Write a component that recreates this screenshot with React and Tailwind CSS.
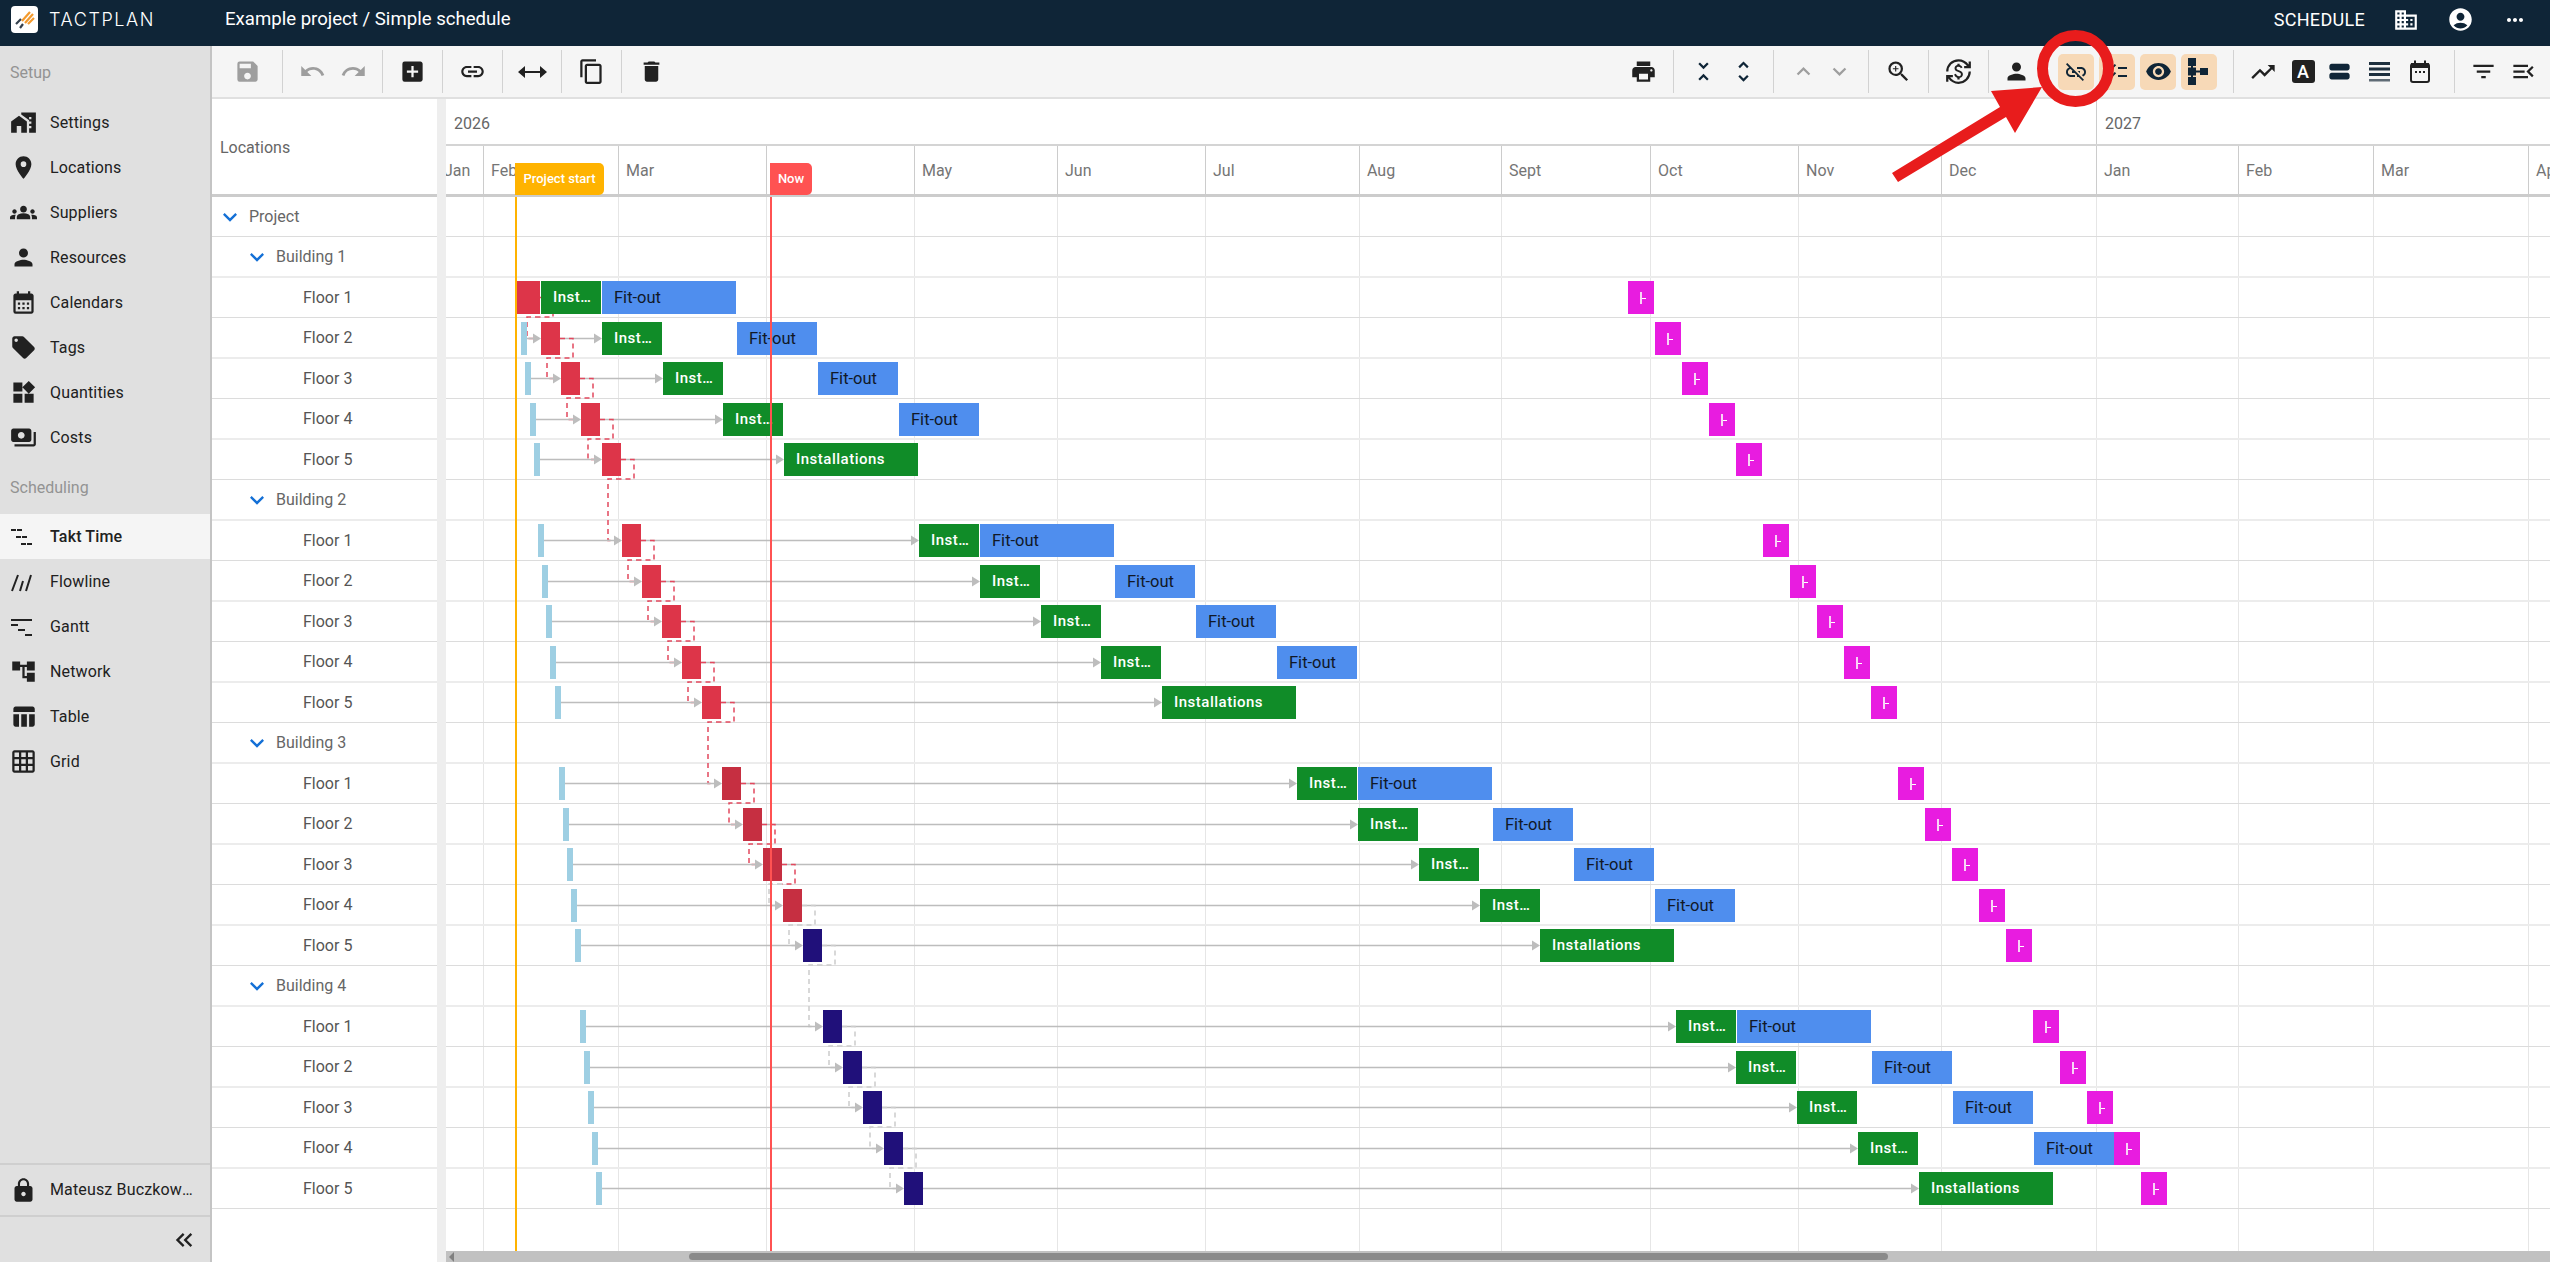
import React from "react";
import {
  MdSave, MdUndo, MdRedo, MdAddBox, MdLink, MdContentCopy, MdDelete, MdPrint, MdUnfoldLess, MdUnfoldMore,
  MdKeyboardArrowUp, MdKeyboardArrowDown, MdZoomIn, MdCurrencyExchange, MdPerson, MdLinkOff, MdChecklist,
  MdVisibility, MdTrendingUp, MdViewStream, MdFilterList, MdMenuOpen, MdHomeWork, MdPlace,
  MdGroups, MdCalendarMonth, MdLocalOffer, MdWidgets, MdPayments, MdAccountTree, MdTableChart, MdGridOn,
  MdLock, MdKeyboardDoubleArrowLeft, MdDomain, MdAccountCircle, MdMoreHoriz,
} from "react-icons/md";

const ORIGIN = 446;
const rowTop = (i) => Math.floor(i / 2) * 81 + (i % 2) * 40;
const rowH = (i) => (i % 2 ? 41 : 40);
const barOff = (i) => (i % 2 ? 4 : 3);
const rowBottom = (i) => rowTop(i) + rowH(i);
const center = (i) => rowTop(i) + barOff(i) + 16.5;

const rows = [{ label: "Project", lvl: 0 }];
for (let b = 1; b <= 4; b++) {
  rows.push({ label: `Building ${b}`, lvl: 1 });
  for (let f = 1; f <= 5; f++) rows.push({ label: `Floor ${f}`, lvl: 2, k: (b - 1) * 5 + f - 1 });
}

const redX = (k) => (k === 0 ? 517 : Math.round(520.9 + 20.15 * k));
const redR = (k) => (k === 0 ? 540 : redX(k) + 19);
const redColor = (k) => (k >= 14 ? "bg-[#20107a]" : k >= 10 ? "bg-[#c62f41]" : "bg-[#dd3549]");
const lightX = (k) => Math.round(517 + 4.17 * k);
const greenX = (k) => {
  let x = 541;
  for (let j = 0; j < k; j++) x += j % 5 === 4 ? 135.2 : 60.75;
  return Math.round(x);
};
const greenW = (k) => (k % 5 === 4 ? 134 : 60);
const blueX = (k) => {
  const base = greenX(k - (k % 5)) + 61;
  return k % 5 === 0 ? base : Math.round(base + 135 + 80.8 * (k % 5 - 1));
};
const blueW = (k) => (k % 5 === 0 ? 134 : 80);

const months = [
  ["Jan", 437], ["Feb", 483], ["Mar", 618], ["Apr", 766], ["May", 914], ["Jun", 1057], ["Jul", 1205],
  ["Aug", 1359], ["Sept", 1501], ["Oct", 1650], ["Nov", 1798], ["Dec", 1941], ["Jan", 2096], ["Feb", 2238],
  ["Mar", 2373], ["Apr", 2528],
];

function TaktIcon() {
  return (
    <svg width="24" height="24" viewBox="0 0 24 24" fill="#212121">
      <rect x="1" y="4" width="5" height="2" /><rect x="7" y="4" width="5" height="2" />
      <rect x="6" y="11" width="5" height="2" /><rect x="12" y="11" width="5" height="2" />
      <rect x="11" y="18" width="5" height="2" /><rect x="17" y="18" width="5" height="2" />
    </svg>
  );
}
function FlowIcon() {
  return (
    <svg width="24" height="24" viewBox="0 0 24 24" stroke="#212121" strokeWidth="2" fill="none">
      <path d="M2 21 L8 5 M10 21 L13 11 M16 21 L21 5" />
    </svg>
  );
}
function GanttIcon() {
  return (
    <svg width="24" height="24" viewBox="0 0 24 24" fill="#212121">
      <rect x="1" y="4" width="21" height="2" /><rect x="1" y="9" width="7" height="2" />
      <rect x="8" y="14" width="7" height="2" /><rect x="15" y="19" width="7" height="2" />
    </svg>
  );
}
function SplitArrow() {
  return (
    <svg width="29" height="14" viewBox="0 0 29 14" fill="#212121">
      <rect x="5" y="6" width="19" height="2" /><path d="M0 7 L7 1 V13 Z M29 7 L22 1 V13 Z" />
    </svg>
  );
}
function TreeIcon() {
  return (
    <svg width="22" height="27" viewBox="0 0 22 27" fill="#0f2537">
      <rect x="0" y="0" width="8" height="8" /><rect x="0" y="9.5" width="8" height="8" /><rect x="0" y="19" width="8" height="8" />
      <rect x="3" y="6" width="2" height="15" /><rect x="6" y="12.5" width="8" height="2" /><rect x="12" y="10" width="8" height="7" />
    </svg>
  );
}
function CalIcon() {
  return (
    <svg width="22" height="24" viewBox="0 0 22 24" fill="none">
      <rect x="2" y="4" width="18" height="18" rx="2" stroke="#212121" strokeWidth="2" />
      <rect x="2" y="3" width="18" height="5" fill="#212121" />
      <rect x="5" y="0.5" width="2" height="4" fill="#212121" /><rect x="15" y="0.5" width="2" height="4" fill="#212121" />
      <rect x="6" y="11" width="2" height="2" fill="#212121" /><rect x="10" y="11" width="2" height="2" fill="#212121" /><rect x="14" y="11" width="2" height="2" fill="#212121" />
    </svg>
  );
}
function HeadlineIcon() {
  return (
    <svg width="21" height="20" viewBox="0 0 21 20">
      <rect x="0" y="0" width="21" height="3" fill="#1d2f3e" /><rect x="0" y="5.5" width="21" height="3" fill="#1d2f3e" />
      <rect x="0" y="11" width="21" height="3" fill="#1d2f3e" /><rect x="0" y="17" width="21" height="2.5" fill="#5f6b75" />
    </svg>
  );
}
function Logo() {
  return (
    <div className="w-[27px] h-[27px] rounded-[4px] bg-white flex items-center justify-center">
      <svg width="22" height="20" viewBox="0 0 22 20" fill="none" strokeWidth="2.2" strokeLinecap="butt">
        <path d="M2 14 L7 9 M6 18 L9 14" stroke="#33404d" />
        <path d="M8 11 L16 2 M11 13 L19 4 M14 14 L20 8" stroke="#f39a2d" />
      </svg>
    </div>
  );
}

const Divider = () => <div className="w-px h-[43px] bg-[#d2d2d2] shrink-0" />;

function Group({ className = "", children }) {
  return <div className={`flex items-center justify-center shrink-0 h-full ${className}`}>{children}</div>;
}

function Orange({ children }) {
  return <div className="w-[36px] h-[36px] rounded-[5px] bg-[#f7d9b7] flex items-center justify-center text-[#0f2537]">{children}</div>;
}

function Toolbar() {
  const s = 27;
  return (
    <div className="h-[53px] bg-[#f5f5f5] border-b-2 border-[#e0e0e0] flex items-center text-[#212121] shrink-0">
      <Group className="w-[70px] text-[#9e9e9e]"><MdSave size={s} /></Group>
      <Divider />
      <Group className="w-[99px] gap-[14px] text-[#9e9e9e]"><MdUndo size={s} /><MdRedo size={s} /></Group>
      <Divider />
      <Group className="w-[59px]"><MdAddBox size={s} /></Group>
      <Divider />
      <Group className="w-[59px]"><MdLink size={s} /></Group>
      <Divider />
      <Group className="w-[58px]"><SplitArrow /></Group>
      <Divider />
      <Group className="w-[59px]"><MdContentCopy size={s} /></Group>
      <Divider />
      <Group className="w-[58px]"><MdDelete size={s} /></Group>
      <div className="flex-1" />
      <Group className="w-[60px]"><MdPrint size={s} /></Group>
      <Divider />
      <Group className="w-[99px] gap-[13px] text-[#0f2537]"><MdUnfoldLess size={s} /><MdUnfoldMore size={s} /></Group>
      <Divider />
      <Group className="w-[94px] gap-[9px] text-[#9e9e9e]"><MdKeyboardArrowUp size={s} /><MdKeyboardArrowDown size={s} /></Group>
      <Divider />
      <Group className="w-[59px]"><MdZoomIn size={s} /></Group>
      <Divider />
      <Group className="w-[59px]"><MdCurrencyExchange size={s} /></Group>
      <Divider />
      <Group className="w-[244px] justify-start pl-[14px]">
        <MdPerson size={s} />
        <div className="flex items-center gap-[5px] ml-[28px]">
          <Orange><MdLinkOff size={24} /></Orange>
          <Orange><MdChecklist size={24} /></Orange>
          <Orange><MdVisibility size={27} /></Orange>
          <Orange><TreeIcon /></Orange>
        </div>
      </Group>
      <Divider />
      <Group className="w-[220px] justify-start pl-[9px]">
        <div className="w-[40px] flex justify-center"><MdTrendingUp size={28} /></div>
        <div className="w-[40px] flex justify-center">
          <div className="w-[23px] h-[23px] rounded-[3px] bg-[#212121] text-white text-[18px] leading-[23px] text-center font-medium">A</div>
        </div>
        <div className="w-[32px] flex justify-center text-[#0f2537]"><MdViewStream size={27} /></div>
        <div className="w-[48px] flex justify-center"><HeadlineIcon /></div>
        <div className="w-[34px] flex justify-center"><CalIcon /></div>
      </Group>
      <Divider />
      <Group className="w-[95px] justify-start pl-[15px] gap-[13px]"><MdFilterList size={s} /><MdMenuOpen size={s} /></Group>
    </div>
  );
}

function NavItem({ icon, label, active }) {
  return (
    <div className={`h-[45px] flex items-center shrink-0 ${active ? "bg-[#f5f5f5] font-medium" : ""}`}>
      <div className="w-[50px] pl-[10px] flex items-center text-[#212121]">{icon}</div>
      <span className="text-[16px] tracking-[0.15px] text-[#212121]">{label}</span>
    </div>
  );
}

function Sidebar() {
  const s = 27;
  return (
    <aside className="w-[212px] shrink-0 bg-[#e0e0e0] border-r-2 border-[#c4c4c4] flex flex-col">
      <div className="h-[53px] flex items-center pl-[10px] pt-[1px] text-[16px] text-[#939393] shrink-0">Setup</div>
      <div className="h-[1px] shrink-0" />
      <NavItem icon={<MdHomeWork size={s} />} label="Settings" />
      <NavItem icon={<MdPlace size={s} />} label="Locations" />
      <NavItem icon={<MdGroups size={s} />} label="Suppliers" />
      <NavItem icon={<MdPerson size={s} />} label="Resources" />
      <NavItem icon={<MdCalendarMonth size={s} />} label="Calendars" />
      <NavItem icon={<MdLocalOffer size={s} />} label="Tags" />
      <NavItem icon={<MdWidgets size={s} />} label="Quantities" />
      <NavItem icon={<MdPayments size={s} />} label="Costs" />
      <div className="h-[54px] flex items-center pl-[10px] pt-[1px] text-[16px] text-[#939393] shrink-0">Scheduling</div>
      <NavItem icon={<TaktIcon />} label="Takt Time" active />
      <NavItem icon={<FlowIcon />} label="Flowline" />
      <NavItem icon={<GanttIcon />} label="Gantt" />
      <NavItem icon={<MdAccountTree size={s} />} label="Network" />
      <NavItem icon={<MdTableChart size={s} />} label="Table" />
      <NavItem icon={<MdGridOn size={s} />} label="Grid" />
      <div className="flex-1" />
      <div className="h-[50px] border-y-2 border-[#cfcfcf] flex items-center shrink-0 box-content">
        <div className="w-[50px] pl-[10px] text-[#212121]"><MdLock size={27} /></div>
        <span className="w-[149px] truncate text-[16px] tracking-[0.15px] text-[#212121]">Mateusz Buczkowski</span>
      </div>
      <div className="h-[45px] flex items-center justify-end pr-[12px] text-[#212121] shrink-0"><MdKeyboardDoubleArrowLeft size={28} /></div>
    </aside>
  );
}

function Row({ i, children }) {
  return (
    <div className={`relative shrink-0 ${i % 2 ? "h-[41px] border-b-2 border-[#ececec]" : "h-[40px] border-b border-[#dcdcdc]"}`}>
      {children}
    </div>
  );
}

function LocationsPanel() {
  return (
    <div className="w-[225px] shrink-0 bg-white flex flex-col">
      <div className="h-[98px] border-b-[3px] border-[#cccccc] flex items-center pl-2 pt-[2px] text-[16px] text-[#666666] shrink-0">Locations</div>
      {rows.map((r, i) => (
        <Row key={i} i={i}>
          <div className="h-full flex items-center pt-[1px] text-[16px] text-[#666666]">
            {r.lvl === 0 && (
              <>
                <MdKeyboardArrowDown size={28} className="ml-[4px] text-[#1470d6]" />
                <span className="ml-[5px]">{r.label}</span>
              </>
            )}
            {r.lvl === 1 && (
              <>
                <MdKeyboardArrowDown size={28} className="ml-[31px] text-[#1470d6]" />
                <span className="ml-[5px]">{r.label}</span>
              </>
            )}
            {r.lvl === 2 && <span className="ml-[91px] text-[#555555]">{r.label}</span>}
          </div>
        </Row>
      ))}
    </div>
  );
}

function Links() {
  const Y = (i) => center(i);
  const out = [];
  rows.forEach((r, i) => {
    if (r.k === undefined) return;
    const k = r.k;
    const y = Y(i);
    const o = -ORIGIN;
    if (k > 0) {
      out.push(<path key={`a${k}`} d={`M${lightX(k) + 6 + o} ${y}H${redX(k) - 7 + o}`} stroke="#bdbdbd" strokeWidth="1.5" fill="none" />);
      out.push(<path key={`b${k}`} d={`M${redX(k) + o} ${y}l-8 -5v10z`} fill="#bdbdbd" />);
      out.push(<path key={`c${k}`} d={`M${redR(k) + o} ${y}H${greenX(k) - 7 + o}`} stroke="#bdbdbd" strokeWidth="1.5" fill="none" />);
      out.push(<path key={`d${k}`} d={`M${greenX(k) + o} ${y}l-8 -5v10z`} fill="#bdbdbd" />);
    }
    if (k < 19) {
      const nextI = rows.findIndex((q) => q.k === k + 1);
      const x1 = redR(k) + 13 + o;
      const yb = rowBottom(i) - 1;
      const x2 = redX(k + 1) - 14 + o;
      const y1 = Y(nextI);
      const x3 = redX(k + 1) - 8 + o;
      const red = "#e2485e";
      const gray = "#cccccc";
      const c1 = k <= 12 ? red : gray;
      const c2 = k <= 11 ? red : gray;
      out.push(<path key={`e${k}`} d={`M${redR(k) + o} ${y}H${x1}V${yb}H${(x1 + x2) / 2}`} stroke={c1} strokeWidth="1.5" strokeDasharray="5 4" fill="none" />);
      out.push(<path key={`f${k}`} d={`M${(x1 + x2) / 2} ${yb}H${x2}V${y1}H${x3}`} stroke={c2} strokeWidth="1.5" strokeDasharray="5 4" fill="none" />);
    }
  });
  return <svg className="absolute left-0 top-[98px] z-10" width="2104" height="1055">{out}</svg>;
}

function Bar({ x, w, color, children, i }) {
  return (
    <div
      className={`absolute h-[33px] z-20 ${color} ${children ? "pl-3 pr-[8px] truncate leading-[33px]" : ""} ${i % 2 ? "top-[4px]" : "top-[3px]"}`}
      style={{ left: x - ORIGIN, width: w }}
    >
      {children}
    </div>
  );
}

function Timeline() {
  const gridX = months.slice(1).map((m) => m[1]);
  const cells = months.map((m, i) => {
    const next = i < months.length - 1 ? months[i + 1][1] : 2550 + 100;
    const start = Math.max(m[1], ORIGIN);
    return { label: m[0], width: Math.min(next, 2550) - start, first: i === 0 };
  });
  return (
    <div className="flex-1 min-w-0 flex flex-col bg-white">
      <div className="relative flex-1 min-h-0 overflow-hidden isolate">
        <div className="h-[47px] flex border-b-2 border-[#d4d4d4] text-[16px] text-[#666666]">
          <div className="w-[1650px] h-full flex items-center pl-2 pt-[4px]">2026</div>
          <div className="flex-1 h-full flex items-center pl-2 pt-[4px] border-l border-[#cccccc]">2027</div>
        </div>
        <div className="h-[51px] flex border-b-[3px] border-[#cccccc] text-[16px] text-[#757575]">
          {cells.map((c, i) => (
            <div
              key={i}
              className={`h-full pt-[13px] shrink-0 overflow-hidden whitespace-nowrap ${c.first ? "pl-0 indent-[-2px]" : "pl-[7px] border-l border-[#cccccc]"}`}
              style={{ width: c.width }}
            >
              {c.label}
            </div>
          ))}
        </div>
        {gridX.map((x, i) => (
          <div key={i} className="absolute top-[98px] bottom-0 w-px bg-[#e6e6e6]" style={{ left: x - ORIGIN }} />
        ))}
        <Links />
        {rows.map((r, i) => (
          <Row key={i} i={i}>
            {r.k !== undefined && (
              <>
                {r.k > 0 && <Bar i={i} x={lightX(r.k)} w={6} color="bg-[#9ecfe3]" />}
                <Bar i={i} x={redX(r.k)} w={redR(r.k) - redX(r.k)} color={redColor(r.k)} />
                <Bar i={i} x={greenX(r.k)} w={greenW(r.k)} color="bg-[#108c28] text-white font-medium text-[15px] tracking-[0.5px]">Installations</Bar>
                {r.k % 5 !== 4 && <Bar i={i} x={blueX(r.k)} w={blueW(r.k)} color="bg-[#4f8eee] text-[#111827] text-[16.5px]">Fit-out</Bar>}
                <div
                  className={`absolute z-20 w-[26px] h-[33px] bg-[#e81ce0] flex items-center pl-[12px] ${i % 2 ? "top-[4px]" : "top-[3px]"}`}
                  style={{ left: Math.round(1628 + 27 * r.k) - ORIGIN }}
                >
                  <div className="relative w-[2px] h-[12px] bg-[#f8d4f6]">
                    <div className="absolute left-[2px] top-[6px] w-[4px] h-px bg-white" />
                  </div>
                </div>
              </>
            )}
          </Row>
        ))}
        <div className="absolute z-30 left-[69px] top-[98px] bottom-0 w-[2px] bg-[#ffb300]" />
        <div className="absolute z-30 left-[324px] top-[98px] bottom-0 w-[2px] bg-[#ff5252]" />
        <div className="absolute z-30 left-[69px] top-[64px] w-[89px] h-[32px] bg-[#ffb300] rounded-r-[5px] text-white text-[13px] font-medium flex items-center justify-center">Project start</div>
        <div className="absolute z-30 left-[324px] top-[64px] w-[42px] h-[32px] bg-[#ff5252] rounded-r-[5px] text-white text-[13px] font-medium flex items-center justify-center">Now</div>
      </div>
      <div className="h-[11px] bg-[#c1c1c1] shrink-0 flex items-center">
        <div className="ml-[3px] w-0 h-0 border-y-[5px] border-y-transparent border-r-[5px] border-r-[#808080]" />
        <div className="ml-[235px] w-[1199px] h-[7px] rounded-full bg-[#8a8a8a]" />
      </div>
    </div>
  );
}

export default function App() {
  return (
    <div className="relative w-[2550px] h-[1262px] overflow-hidden flex flex-col bg-white [font-family:Roboto,sans-serif]">
      <header className="h-[46px] pb-[7px] bg-[#0f2537] flex items-center text-white shrink-0">
        <div className="ml-[11px]"><Logo /></div>
        <div className="ml-[11px] w-[125px] text-[18px] font-light tracking-[1.6px] whitespace-nowrap [font-family:Inter,sans-serif]">TACTPLAN</div>
        <div className="ml-[51px] text-[18.6px]">Example project / Simple schedule</div>
        <div className="flex-1" />
        <div className="text-[18px] tracking-[0.3px]">SCHEDULE</div>
        <MdDomain size={26} className="ml-[28px]" />
        <MdAccountCircle size={27} className="ml-[28px]" />
        <MdMoreHoriz size={24} className="ml-[29px] mr-[23px]" />
      </header>
      <div className="flex-1 min-h-0 flex">
        <Sidebar />
        <div className="flex-1 min-w-0 flex flex-col">
          <Toolbar />
          <div className="flex-1 min-h-0 flex">
            <LocationsPanel />
            <div className="w-[9px] bg-[#eeeeee] shrink-0" />
            <Timeline />
          </div>
        </div>
      </div>
      <svg className="absolute left-0 top-0 z-50 pointer-events-none" width="2550" height="1262">
        <polygon points="1892,173 2000,107 1991,91 2042,87 2015,133 2006,117 1898,182" fill="#e81c1c" />
        <ellipse cx="2075.5" cy="68.5" rx="33" ry="33" fill="none" stroke="#e81c1c" strokeWidth="11" />
      </svg>
    </div>
  );
}
